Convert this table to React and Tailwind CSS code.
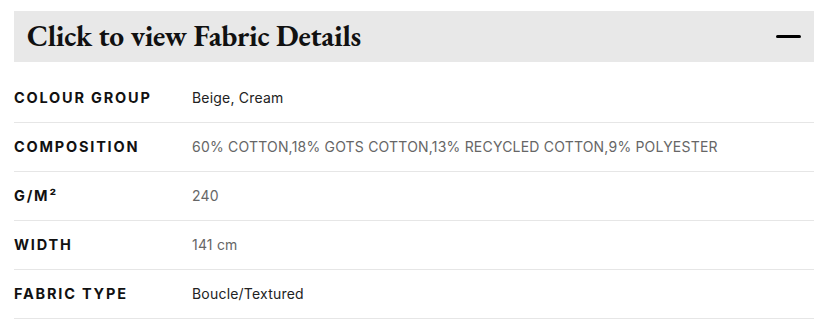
const rows = [
  { label: "Colour Group", value: "Beige, Cream", dark: true },
  { label: "Composition", value: "60% COTTON,18% GOTS COTTON,13% RECYCLED COTTON,9% POLYESTER" },
  { label: "G/M²", value: "240" },
  { label: "Width", value: "141 cm" },
  { label: "Fabric Type", value: "Boucle/Textured", dark: true },
];

export default function App() {
  return (
    <div className="w-[822px] h-[326px] bg-white pl-[14px] pt-[11px]">
      <div className="w-[800px]">
        {/* Accordion header */}
        <div className="h-[51px] bg-[#e8e8e8] flex items-center justify-between pl-[13px] pr-[13px]">
          <h2 className="text-[29.5px] font-bold text-[#111] tracking-[-0.25px] font-['EB_Garamond','Liberation_Serif',serif]">
            Click to view Fabric Details
          </h2>
          <span className="block w-[25px] h-[3px] bg-black rounded-full" />
        </div>

        {/* Details */}
        <div className="mt-[12px] font-['Inter',sans-serif]">
          {rows.map((row) => (
            <div key={row.label} className="h-[49px] flex items-center border-b border-[#e6e6e6]">
              <div className="w-[178px] text-[14.5px] font-bold uppercase tracking-[1.8px] text-[#111]">
                {row.label}
              </div>
              <div className={`text-[14px] tracking-[0.2px] -mt-[1px] ${row.dark ? "text-[#222]" : "text-[#666]"}`}>
                {row.value}
              </div>
            </div>
          ))}
        </div>
      </div>
    </div>
  );
}
